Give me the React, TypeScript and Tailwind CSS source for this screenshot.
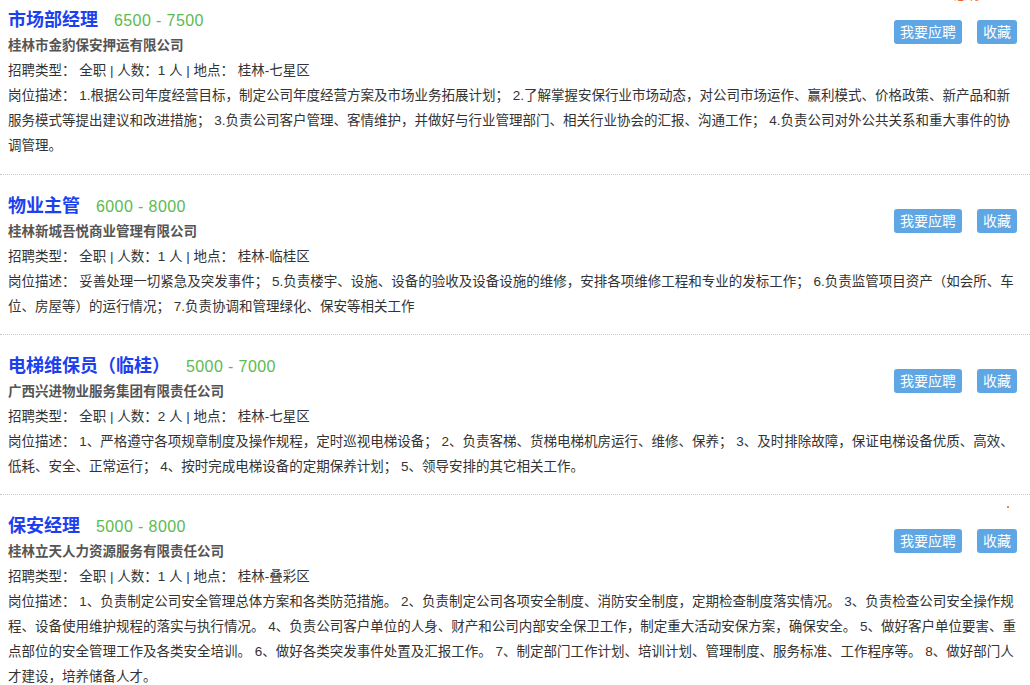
type Job = {
  title: string;
  salary: string;
  company: string;
  kind: string;
  count: number;
  place: string;
  desc: string;
};

const JOBS: Job[] = [
  {
    title: "市场部经理",
    salary: "6500 - 7500",
    company: "桂林市金豹保安押运有限公司",
    kind: "全职",
    count: 1,
    place: "桂林-七星区",
    desc: "1.根据公司年度经营目标，制定公司年度经营方案及市场业务拓展计划； 2.了解掌握安保行业市场动态，对公司市场运作、赢利模式、价格政策、新产品和新服务模式等提出建议和改进措施； 3.负责公司客户管理、客情维护，并做好与行业管理部门、相关行业协会的汇报、沟通工作； 4.负责公司对外公共关系和重大事件的协调管理。",
  },
  {
    title: "物业主管",
    salary: "6000 - 8000",
    company: "桂林新城吾悦商业管理有限公司",
    kind: "全职",
    count: 1,
    place: "桂林-临桂区",
    desc: "妥善处理一切紧急及突发事件； 5.负责楼宇、设施、设备的验收及设备设施的维修，安排各项维修工程和专业的发标工作； 6.负责监管项目资产（如会所、车位、房屋等）的运行情况； 7.负责协调和管理绿化、保安等相关工作",
  },
  {
    title: "电梯维保员（临桂）",
    salary: "5000 - 7000",
    company: "广西兴进物业服务集团有限责任公司",
    kind: "全职",
    count: 2,
    place: "桂林-七星区",
    desc: "1、严格遵守各项规章制度及操作规程，定时巡视电梯设备； 2、负责客梯、货梯电梯机房运行、维修、保养； 3、及时排除故障，保证电梯设备优质、高效、低耗、安全、正常运行； 4、按时完成电梯设备的定期保养计划； 5、领导安排的其它相关工作。",
  },
  {
    title: "保安经理",
    salary: "5000 - 8000",
    company: "桂林立天人力资源服务有限责任公司",
    kind: "全职",
    count: 1,
    place: "桂林-叠彩区",
    desc: "1、负责制定公司安全管理总体方案和各类防范措施。 2、负责制定公司各项安全制度、消防安全制度，定期检查制度落实情况。 3、负责检查公司安全操作规程、设备使用维护规程的落实与执行情况。 4、负责公司客户单位的人身、财产和公司内部安全保卫工作，制定重大活动安保方案，确保安全。 5、做好客户单位要害、重点部位的安全管理工作及各类安全培训。 6、做好各类突发事件处置及汇报工作。 7、制定部门工作计划、培训计划、管理制度、服务标准、工作程序等。 8、做好部门人才建设，培养储备人才。",
  },
];

function JobItem({ job, first }: { job: Job; first?: boolean }) {
  return (
    <div
      className={
        first
          ? "relative pl-2 pr-[13px] pt-[7px] pb-4 border-b border-dotted border-[#c8c8c8]"
          : "relative pl-2 pr-[13px] pt-[18px] pb-[15px] border-b border-dotted border-[#c8c8c8]"
      }
    >
      {first && (
        <span className="absolute top-[-13px] right-[50px] text-[13px] leading-[15px] text-[#f5621e]">
          急聘
        </span>
      )}
      <div className="flex justify-between">
        <div>
          <div className="flex items-baseline h-[26px] leading-[26px]">
            <span className="text-[18px] font-bold text-[#1d40ee]">{job.title}</span>
            <span className="ml-4 text-[16px] tracking-[0.4px] text-[#5cba4f]">{job.salary}</span>
          </div>
          <div className="h-[25px] leading-[25px] font-bold text-[#555]">{job.company}</div>
          <div className="h-[25px] leading-[25px] text-[#333]">
            招聘类型： {job.kind} | 人数：{job.count} 人 | 地点： {job.place}
          </div>
        </div>
        <div className={first ? "flex gap-[15px] mt-[13px] self-start" : "flex gap-[15px] mt-4 self-start"}>
          <button className="h-6 px-[6px] rounded-[3px] bg-[#5ea7e4] text-white text-[14px] leading-6">
            我要应聘
          </button>
          <button className="h-6 px-[6px] rounded-[3px] bg-[#5ea7e4] text-white text-[14px] leading-6">
            收藏
          </button>
        </div>
      </div>
      <p className="leading-[25px] text-[#333]">岗位描述： {job.desc}</p>
    </div>
  );
}

export default function App() {
  return (
    <div className="w-[1030px] h-[685px] overflow-hidden bg-white font-['Liberation_Sans','Noto_Sans_CJK_SC',sans-serif] text-[13.5px]">
      {JOBS.map((job, i) => (
        <div key={job.title} className="relative">
          <JobItem job={job} first={i === 0} />
          {i === 3 && (
            <span className="absolute top-[11px] right-[21px] w-[2px] h-[2px] bg-[#f08a3c]" />
          )}
        </div>
      ))}
    </div>
  );
}
